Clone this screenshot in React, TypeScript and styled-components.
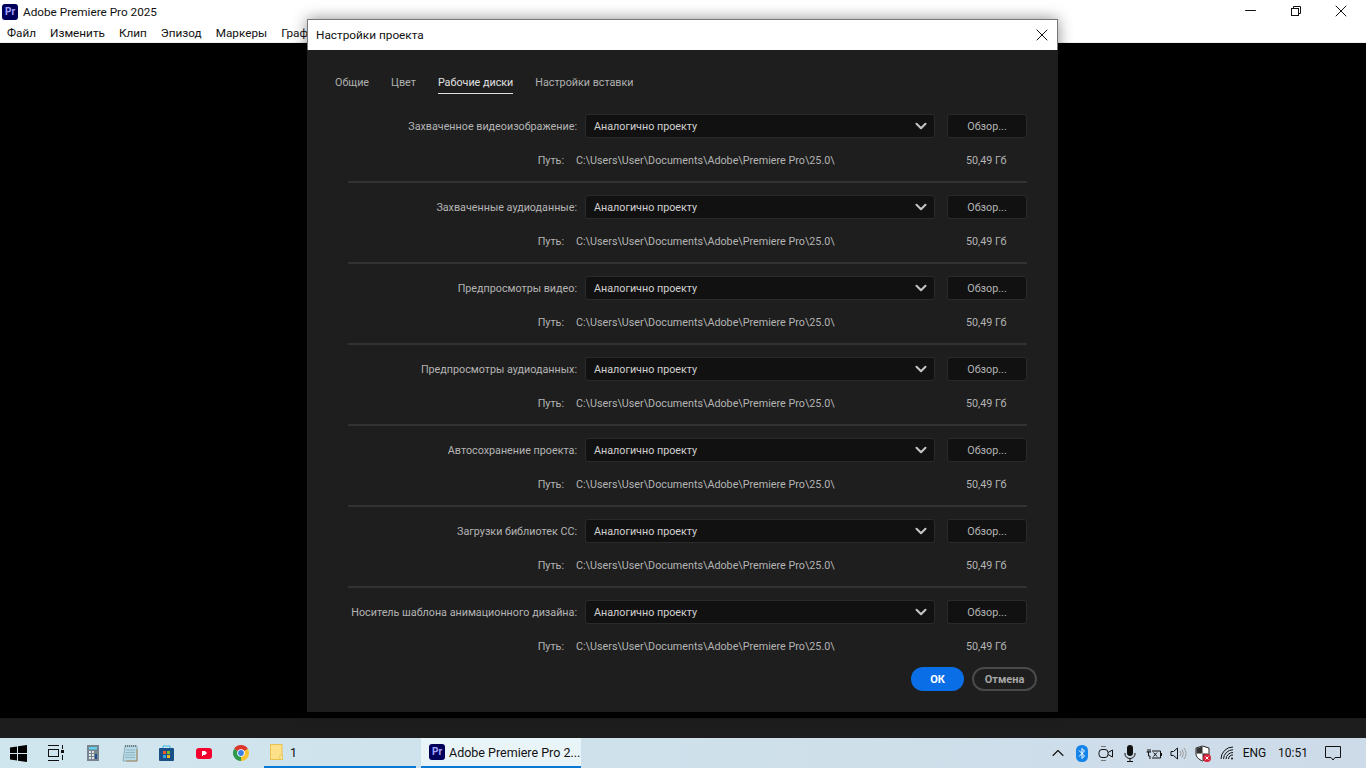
import * as React from "react";
import styled, { createGlobalStyle } from "styled-components";
import { X, Minus, ChevronDown, ChevronUp } from "lucide-react";

const Global = createGlobalStyle`
  html, body { margin: 0; padding: 0; background: #000; }
  #root { width: 1366px; height: 768px; overflow: hidden; }
  * { box-sizing: border-box; }
`;

const Screen = styled.div`
  position: relative;
  width: 1366px;
  height: 768px;
  display: flex;
  flex-direction: column;
  font-family: Roboto, "Noto Sans", sans-serif;
`;

const AppHeader = styled.header`
  height: 43px;
  background: #fff;
  border-bottom: 1px solid #f0f0f0;
  position: relative;
  flex: none;
`;

const TitleRow = styled.div`
  height: 24px;
  display: flex;
  align-items: center;
  padding-left: 2px;
  gap: 5px;
  font-size: 11.75px;
  color: #111;
`;

const MenuRow = styled.nav`
  height: 18px;
  display: flex;
  align-items: center;
  padding-left: 7px;
  gap: 14px;
  font-size: 11.75px;
  color: #111;
`;

const WindowControls = styled.div`
  position: absolute;
  top: 0;
  right: 2px;
  display: flex;
`;

const WindowControl = styled.div`
  width: 45.5px;
  height: 21px;
  display: flex;
  align-items: center;
  justify-content: center;
  color: #111;
`;

const Workspace = styled.main`
  flex: 1;
  background: #000;
`;

const StatusBand = styled.div`
  height: 20px;
  flex: none;
  background: #1d1d1d;
`;

const Taskbar = styled.footer`
  height: 30px;
  flex: none;
  display: flex;
  align-items: stretch;
  background: linear-gradient(90deg, #d0e6ee, #cddbe8);
`;

const PinSlot = styled.div<{ $w?: number }>`
  width: ${(p) => p.$w ?? 37}px;
  flex: none;
  display: flex;
  align-items: center;
  justify-content: center;
`;

const TaskTab = styled.div<{ $active?: boolean; $w: number; $ml: number; $pl: number }>`
  width: ${(p) => p.$w}px;
  margin-left: ${(p) => p.$ml}px;
  flex: none;
  display: flex;
  align-items: center;
  gap: 4px;
  padding-left: ${(p) => p.$pl}px;
  font-size: 12.5px;
  color: #111;
  border-bottom: 2px solid #0a78d4;
  background: ${(p) => (p.$active ? "#e9f4f9" : "transparent")};
`;

const Tray = styled.div`
  margin-left: auto;
  display: flex;
  align-items: center;
  color: #111;
  font-size: 12px;
`;

const TraySlot = styled.div<{ $w?: number }>`
  width: ${(p) => p.$w ?? 24.2}px;
  height: 100%;
  flex: none;
  display: flex;
  align-items: center;
  justify-content: center;
`;

const Dialog = styled.section`
  position: absolute;
  left: 307px;
  top: 19px;
  width: 751px;
  height: 693px;
  display: flex;
  flex-direction: column;
  background: #1e1e1e;
  box-shadow: 0 0 14px rgba(0, 0, 0, 0.45);
`;

const DialogTitle = styled.div`
  height: 31px;
  flex: none;
  display: flex;
  align-items: center;
  justify-content: space-between;
  background: #fff;
  border: 1px solid #777;
  border-bottom: none;
  padding: 0 5px 0 8px;
  font-size: 11.8px;
  color: #111;
`;

const DialogBody = styled.div`
  flex: 1;
  display: flex;
  flex-direction: column;
  padding: 0 31px 0 41px;
`;

const Tabs = styled.div`
  display: flex;
  gap: 22px;
  margin: 23px 0 0 -13px;
  height: 41px;
`;

const Tab = styled.div<{ $active?: boolean }>`
  height: 21px;
  line-height: 19px;
  font-size: 10.75px;
  color: ${(p) => (p.$active ? "#e0e0e0" : "#b0b0b0")};
  border-bottom: ${(p) => (p.$active ? "1px solid #e0e0e0" : "none")};
`;

const Row = styled.div<{ $last?: boolean }>`
  height: ${(p) => (p.$last ? 53 : 81)}px;
  flex: none;
`;

const ControlLine = styled.div`
  height: 24px;
  display: flex;
  align-items: center;
`;

const FieldLabel = styled.div`
  width: 229px;
  margin-right: 8px;
  text-align: right;
  white-space: nowrap;
  font-size: 10.75px;
  color: #b4b4b4;
`;

const Select = styled.div`
  width: 350px;
  height: 24px;
  display: flex;
  align-items: center;
  justify-content: space-between;
  padding: 0 4px 0 8px;
  background: #111;
  border: 1px solid #2a2a2a;
  border-radius: 3px;
  font-size: 10.75px;
  color: #d0d0d0;
`;

const Browse = styled.div`
  width: 80px;
  height: 24px;
  margin-left: 12px;
  display: flex;
  align-items: center;
  justify-content: center;
  background: #111;
  border: 1px solid #2a2a2a;
  border-radius: 3px;
  font-size: 10.75px;
  color: #b4b4b4;
`;

const PathLine = styled.div`
  display: flex;
  align-items: center;
  height: 20px;
  margin-top: 12px;
  font-size: 10.75px;
  color: #b4b4b4;
`;

const PathLabel = styled.div`
  width: 216px;
  text-align: right;
`;

const PathValue = styled.div`
  width: 390px;
  margin-left: 12px;
  white-space: nowrap;
`;

const FreeSpace = styled.div`
  width: 41px;
  white-space: nowrap;
`;

const Divider = styled.div`
  height: 2px;
  margin-top: 11px;
  background: #323232;
`;

const Footer = styled.div`
  display: flex;
  justify-content: flex-end;
  gap: 8px;
  margin: 14px -10px 0 0;
`;

const PrimaryButton = styled.div`
  width: 53px;
  height: 24px;
  display: flex;
  align-items: center;
  justify-content: center;
  border-radius: 12px;
  background: #0a6fe6;
  color: #fff;
  font-size: 11px;
  font-weight: 700;
`;

const SecondaryButton = styled.div`
  width: 65px;
  height: 24px;
  display: flex;
  align-items: center;
  justify-content: center;
  border-radius: 12px;
  border: 2px solid #4a4a4a;
  color: #a6a6a6;
  font-size: 11px;
  font-weight: 700;
`;

const PrBadge = styled.div<{ $size: number }>`
  width: ${(p) => p.$size}px;
  height: ${(p) => p.$size}px;
  flex: none;
  display: flex;
  align-items: center;
  justify-content: center;
  border-radius: 3px;
  background: #00005b;
  color: #a7a7ff;
  font-size: ${(p) => Math.round(p.$size * 0.6)}px;
  font-weight: 700;
  line-height: 1;
`;

const RestoreIcon = () => (
  <svg width="12" height="12" viewBox="0 0 12 12" fill="none" stroke="#111">
    <rect x="1.5" y="3.5" width="7" height="7" />
    <path d="M3.5 3.5V1.5H10.5V8.5H8.5" />
  </svg>
);

const WinLogo = () => (
  <svg width="17" height="17" viewBox="0 0 17 17" fill="#000">
    <path d="M0 2.4 7 1.4V8H0ZM8 1.2 17 0V8H8ZM0 9H7V15.6L0 14.6ZM8 9H17V17L8 15.8Z" />
  </svg>
);

const TaskViewIcon = () => (
  <svg width="17" height="17" viewBox="0 0 17 17" fill="none" stroke="#111">
    <path d="M1 .5H12M1 15.5H12" />
    <rect x="1.5" y="4.5" width="10" height="7" />
    <path d="M15.5 0V4M15.5 10V15" />
    <rect x="14" y="5" width="3" height="3" fill="#111" stroke="none" />
  </svg>
);

const CalcIcon = () => (
  <svg width="12" height="16" viewBox="0 0 12 16">
    <rect width="12" height="16" fill="#78858f" />
    <rect x="2" y="2" width="8" height="2.5" fill="#5fd0ee" />
    <path d="M2 6h2v2H2zM5 6h2v2H5zM2 9h2v2H2zM5 9h2v2H5zM2 12h2v2H2zM5 12h2v2H5z" fill="#dfe6ea" />
    <rect x="8" y="9" width="2" height="5" fill="#1d4f8f" />
  </svg>
);

const NotepadIcon = () => (
  <svg width="16" height="17" viewBox="0 0 16 17">
    <path d="M3 1H15V16H1Z" fill="#b7dbe6" stroke="#7d98a5" strokeWidth=".7" />
    <path d="M4 16H15V4" fill="none" stroke="#a88b5e" />
    <path d="M4 5H13M3.6 7.5H13M3.2 10H13M2.8 12.5H13" stroke="#7fa3b1" strokeWidth=".7" />
    <path d="M3 1H15" stroke="#333" strokeDasharray="1 1" />
  </svg>
);

const StoreIcon = () => (
  <svg width="15" height="16" viewBox="0 0 15 16">
    <path d="M4 3V1H11V3" fill="none" stroke="#37b8e8" />
    <rect y="3" width="15" height="13" rx="1" fill="#174f86" />
    <rect x="4" y="6" width="3" height="3" fill="#ef5a29" />
    <rect x="8" y="6" width="3" height="3" fill="#7ebb2b" />
    <rect x="4" y="10" width="3" height="3" fill="#2fa6e0" />
    <rect x="8" y="10" width="3" height="3" fill="#f4b81c" />
  </svg>
);

const RedPlayIcon = () => (
  <svg width="16" height="11" viewBox="0 0 16 11">
    <rect width="16" height="11" rx="3" fill="#f5002d" />
    <path d="M6 3H9L11 5 9 7H7V8H6Z" fill="#fff" />
  </svg>
);

const ChromeIcon = () => (
  <svg width="16" height="16" viewBox="0 0 16 16">
    <path d="M8 8 1.07 4A8 8 0 0 1 14.93 4Z" fill="#d9372c" />
    <path d="M8 8 14.93 4A8 8 0 0 1 8 16Z" fill="#f7c32e" />
    <path d="M8 8 8 16A8 8 0 0 1 1.07 4Z" fill="#2f9a4b" />
    <circle cx="8" cy="8" r="3.8" fill="#fff" />
    <circle cx="8" cy="8" r="2.9" fill="#3a7fe8" />
  </svg>
);

const FolderPageIcon = () => (
  <svg width="13" height="16" viewBox="0 0 13 16">
    <rect x=".5" y=".5" width="11.5" height="15" fill="#fde08a" stroke="#eac24f" />
    <path d="M10 11H12.5V15.5H10Z" fill="#fff0b8" stroke="#eac24f" />
  </svg>
);

const BluetoothIcon = () => (
  <svg width="12" height="17" viewBox="0 0 12 17">
    <rect width="12" height="17" rx="5.5" fill="#1484ea" />
    <path d="M3 5.5 8.5 11 6 13.5V3.5L8.5 6 3 11.5" fill="none" stroke="#fff" />
  </svg>
);

const CameraIcon = () => (
  <svg width="16" height="17" viewBox="0 0 16 17" fill="none" stroke="#111">
    <rect x="1" y="4.5" width="9" height="8" rx="3" />
    <path d="M10 7.5 14.5 5V12L10 9.5" />
    <path d="M3 1.5H8M3 15.5H8" stroke="#777" />
  </svg>
);

const MicIcon = () => (
  <svg width="12" height="17" viewBox="0 0 12 17">
    <rect x="3" y="0" width="6" height="11" rx="3" fill="#111" />
    <path d="M1 8V9A5 4.5 0 0 0 11 9V8M6 13.5V16M3 16.5H9" fill="none" stroke="#111" />
  </svg>
);

const BatteryIcon = () => (
  <svg width="16" height="15" viewBox="0 0 16 15" fill="none" stroke="#111">
    <path d="M.5 6H5M2 3V6M4 3V6M2.5 6V10H4V13" />
    <path d="M6 5H14.5V12H6" />
    <path d="M7.5 6.5 11 10.5M11 6.5 7.5 10.5" />
    <rect x="15" y="7" width="1" height="3" fill="#111" stroke="none" />
  </svg>
);

const VolumeIcon = () => (
  <svg width="17" height="15" viewBox="0 0 17 15" fill="none" stroke="#111">
    <path d="M1 5.5H3.5L7.5 2V13L3.5 9.5H1Z" />
    <path d="M10 5A4 4 0 0 1 10 10M12 3.5A7 7 0 0 1 12 11.5M14 2A9 9 0 0 1 14 13" stroke="#999" />
  </svg>
);

const ShieldIcon = () => (
  <svg width="16" height="17" viewBox="0 0 16 17">
    <path d="M7.5 1 14 3V9C14 12 11 14.5 7.5 16 4 14.5 1 12 1 9V3Z" fill="#fff" stroke="#222" />
    <path d="M7.5 1.5V8.5H1.5V3.4ZM7.5 8.5H13.5V9C13.5 11.5 11 14 7.5 15.5Z" fill="#333" />
    <circle cx="12" cy="13" r="4" fill="#d8243a" />
    <path d="M10.5 11.5 13.5 14.5M13.5 11.5 10.5 14.5" stroke="#fff" />
  </svg>
);

const WifiIcon = () => (
  <svg width="14" height="14" viewBox="0 0 14 14" fill="none" stroke="#111">
    <path d="M1 13A12 12 0 0 1 13 1" />
    <path d="M3.5 13A9.5 9.5 0 0 1 13 3.8" />
    <path d="M6 13A7 7 0 0 1 13 6.5" />
    <path d="M8.5 13A4.5 4.5 0 0 1 13 9" />
    <circle cx="12" cy="12.5" r="1" fill="#111" stroke="none" />
  </svg>
);

const NotifyIcon = () => (
  <svg width="16" height="16" viewBox="0 0 16 16" fill="none" stroke="#111">
    <path d="M.5 1.5H15.5V12.5H10L8 15 6 12.5H.5Z" />
  </svg>
);

const tabs = ["Общие", "Цвет", "Рабочие диски", "Настройки вставки"];
const rows = [
  "Захваченное видеоизображение:",
  "Захваченные аудиоданные:",
  "Предпросмотры видео:",
  "Предпросмотры аудиоданных:",
  "Автосохранение проекта:",
  "Загрузки библиотек CC:",
  "Носитель шаблона анимационного дизайна:",
];
// the dialog hides the rest of the last item
const menu = ["Файл", "Изменить", "Клип", "Эпизод", "Маркеры", "Граф"];
const pins = [<CalcIcon />, <NotepadIcon />, <StoreIcon />, <RedPlayIcon />, <ChromeIcon />];

export default function App() {
  return (
    <Screen>
      <Global />
      <AppHeader>
        <TitleRow>
          <PrBadge $size={16}>Pr</PrBadge>
          Adobe Premiere Pro 2025
        </TitleRow>
        <MenuRow>
          {menu.map((m) => (
            <span key={m}>{m}</span>
          ))}
        </MenuRow>
        <WindowControls>
          <WindowControl>
            <Minus size={17} strokeWidth={1.4} />
          </WindowControl>
          <WindowControl>
            <RestoreIcon />
          </WindowControl>
          <WindowControl>
            <X size={20} strokeWidth={1.2} />
          </WindowControl>
        </WindowControls>
      </AppHeader>
      <Workspace />
      <StatusBand />
      <Taskbar>
        <PinSlot $w={36}>
          <WinLogo />
        </PinSlot>
        <PinSlot $w={38}>
          <TaskViewIcon />
        </PinSlot>
        {pins.map((icon, i) => (
          <PinSlot key={i}>{icon}</PinSlot>
        ))}
        <TaskTab $w={152} $ml={5} $pl={6}>
          <FolderPageIcon />
          &nbsp;1
        </TaskTab>
        <TaskTab $active $w={160} $ml={5} $pl={8}>
          <PrBadge $size={16}>Pr</PrBadge>
          Adobe Premiere Pro 2...
        </TaskTab>
        <Tray>
          <TraySlot>
            <ChevronUp size={20} strokeWidth={1.3} />
          </TraySlot>
          <TraySlot>
            <BluetoothIcon />
          </TraySlot>
          <TraySlot>
            <CameraIcon />
          </TraySlot>
          <TraySlot>
            <MicIcon />
          </TraySlot>
          <TraySlot>
            <BatteryIcon />
          </TraySlot>
          <TraySlot>
            <VolumeIcon />
          </TraySlot>
          <TraySlot>
            <ShieldIcon />
          </TraySlot>
          <TraySlot>
            <WifiIcon />
          </TraySlot>
          <TraySlot $w={31}>ENG</TraySlot>
          <TraySlot $w={46}>10:51</TraySlot>
          <TraySlot $w={34}>
            <NotifyIcon />
          </TraySlot>
          <TraySlot $w={16} />
        </Tray>
      </Taskbar>

      <Dialog>
        <DialogTitle>
          Настройки проекта
          <X size={20} strokeWidth={1.2} color="#111" />
        </DialogTitle>
        <DialogBody>
          <Tabs>
            {tabs.map((t, i) => (
              <Tab key={t} $active={i === 2}>
                {t}
              </Tab>
            ))}
          </Tabs>
          {rows.map((label, i) => (
            <Row key={label} $last={i === rows.length - 1}>
              <ControlLine>
                <FieldLabel>{label}</FieldLabel>
                <Select>
                  Аналогично проекту
                  <ChevronDown size={18} strokeWidth={2.8} color="#c4c4c4" />
                </Select>
                <Browse>Обзор...</Browse>
              </ControlLine>
              <PathLine>
                <PathLabel>Путь:</PathLabel>
                <PathValue>C:\Users\User\Documents\Adobe\Premiere Pro\25.0\</PathValue>
                <FreeSpace>50,49 Гб</FreeSpace>
              </PathLine>
              {i < rows.length - 1 && <Divider />}
            </Row>
          ))}
          <Footer>
            <PrimaryButton>ОК</PrimaryButton>
            <SecondaryButton>Отмена</SecondaryButton>
          </Footer>
        </DialogBody>
      </Dialog>
    </Screen>
  );
}
